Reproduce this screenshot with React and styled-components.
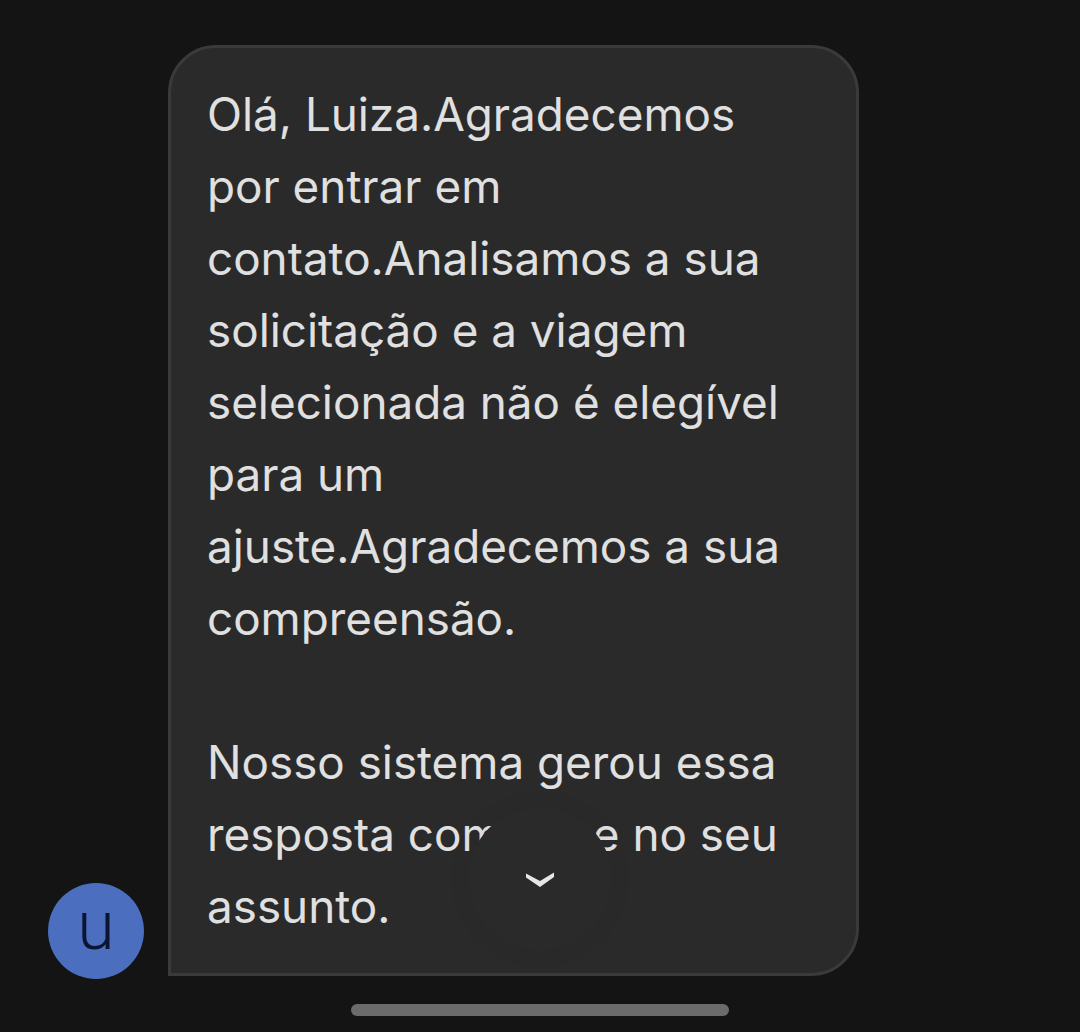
import React from "react";
import styled, { createGlobalStyle } from "styled-components";

const Global = createGlobalStyle`
  html, body { margin: 0; padding: 0; background: #141414; }
  #root { width: 1080px; height: 1032px; }
`;

const Screen = styled.div`
  position: relative;
  width: 1080px;
  height: 1032px;
  overflow: hidden;
  background: #141414;
  display: flex;
  flex-direction: column;
  box-sizing: border-box;
  padding-top: 45px;
  font-family: "Inter", "Liberation Sans", sans-serif;
`;

const MessageRow = styled.div`
  display: flex;
  align-items: flex-end;
  gap: 24px;
  padding-left: 48px;
`;

const Avatar = styled.div`
  flex: none;
  width: 96px;
  height: 96px;
  margin-bottom: -3px;
  border-radius: 50%;
  background: #4b6ebf;
  color: #0b1430;
  display: flex;
  align-items: center;
  justify-content: center;
  font-family: "Roboto", sans-serif;
  font-size: 68px;
  font-weight: 300;
  line-height: 1;
`;

const AvatarLetter = styled.span`
  display: block;
  transform: translateY(-5px);
`;

const Bubble = styled.div`
  box-sizing: border-box;
  width: 691px;
  height: 931px;
  padding: 31px 36px 0;
  background: #2a2a2a;
  border: 3px solid #3a3a3a;
  border-radius: 48px 48px 48px 0;
  color: #e0e0e0;
  font-size: 45.8px;
  font-weight: 400;
  line-height: 72px;
  white-space: nowrap;
`;

const Paragraph = styled.p`
  margin: 0 0 72px;
  &:last-child { margin-bottom: 0; }
`;

const ScrollButton = styled.div`
  position: absolute;
  left: 468px;
  top: 807px;
  width: 144px;
  height: 144px;
  border-radius: 50%;
  background: #2a2a2a;
  box-shadow: 0 0 24px rgba(0, 0, 0, 0.06);
  display: flex;
  align-items: center;
  justify-content: center;
`;

const Chevron = styled.svg`
  display: block;
  margin-top: -1px;
`;

const HomeBar = styled.div`
  width: 378px;
  height: 12px;
  margin: 28px auto 0;
  border-radius: 6px;
  background: #6b6b6b;
`;

export default function App() {
  return (
    <Screen>
      <Global />
      <MessageRow>
        <Avatar><AvatarLetter>u</AvatarLetter></Avatar>
        <Bubble>
          <Paragraph>
            Olá, Luiza.Agradecemos<br />
            por entrar em<br />
            contato.Analisamos a sua<br />
            solicitação e a viagem<br />
            selecionada não é elegível<br />
            para um<br />
            ajuste.Agradecemos a sua<br />
            compreensão.
          </Paragraph>
          <Paragraph>
            Nosso sistema gerou essa<br />
            resposta com base no seu<br />
            assunto.
          </Paragraph>
        </Bubble>
      </MessageRow>
      <HomeBar />
      <ScrollButton>
        <Chevron width="28" height="16" viewBox="0 0 28 16">
          <path d="M0 2.5 L14 10 L28 1.5 V6 L14 16 L0 6.5 Z" fill="#e6e6e6" />
        </Chevron>
      </ScrollButton>
    </Screen>
  );
}
